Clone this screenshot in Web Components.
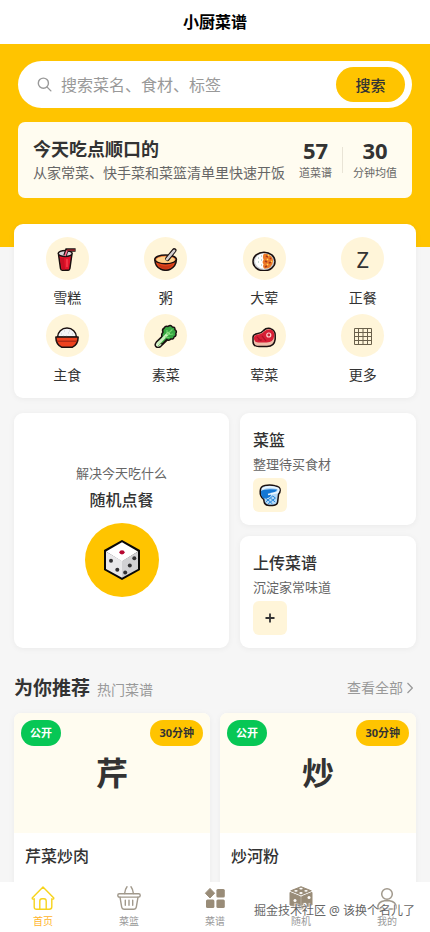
<!DOCTYPE html>
<html lang="zh-CN">
<head>
<meta charset="utf-8">
<meta name="viewport" content="width=device-width, initial-scale=1">
<title>小厨菜谱</title>
<style>
html, body { margin: 0; height: 100%; }
body {
  --brand: #ffc400; --ink: #333; --muted: #666; --faint: #999; --cream: #fffcf0; --soft: #fff5d9;
  --shadow: 0 1px 6px rgba(0, 0, 0, .05);
  font-family: "Noto Sans", "Noto Sans CJK SC", sans-serif;
  color: var(--ink); background: #f6f6f6;
}
</style>
</head>
<body>
<recipe-app></recipe-app>
<script>
const define = (name, html, setup) => {
  const template = document.createElement('template');
  template.innerHTML = html;
  customElements.define(name, class extends HTMLElement {
    constructor() {
      super();
      this.attachShadow({ mode: 'open' }).append(template.content.cloneNode(true));
    }
    connectedCallback() { if (setup) setup(this, this.shadowRoot); }
  });
};

const K = 'stroke="#1a1010" stroke-width="1.5" stroke-linejoin="round" stroke-linecap="round"';
const ICONS = {
  search: ['0 0 16 16', '<g fill="none" stroke="#999" stroke-width="1.5" stroke-linecap="round"><circle cx="6.8" cy="6.6" r="5.4"/><path d="M10.8 10.8 14.8 14.8"/></g>'],
  chevron: ['0 0 6 12', '<path d="M.5 1 5.3 6 .5 11" fill="none" stroke="#999" stroke-width="1.2"/>'],
  cup: ['0 0 24 24', `<path d="M3.6 8 5.5 21.5Q5.8 23.3 8 23.3h4.6q2 0 2.3-1.8L16.8 8Z" fill="#e5142b" ${K}/><path d="M5 11h4l1 11.5H7Z" fill="#c80f24"/><path d="M12 12v8" stroke="#ff5261"/><ellipse cx="10.2" cy="6.5" rx="7" ry="3" fill="#d6d6da" ${K}/><path d="m10 8.5 1.8-5.4h8.8" fill="none" stroke="#1a1010" stroke-width="3.5"/><path d="m10 9 2-5.6" stroke="#ff6f91" stroke-width="1.6"/><path d="M12 3.1h8" stroke="#b52a33" stroke-width="1.3"/>`],
  porridge: ['0 0 24 24', `<path d="M.8 12.5C1 19 5 21.5 7 22.3q5 2 9.2 0C19.5 20.6 22.3 17 22.4 12.5Z" fill="#e6481d" ${K}/><path d="M4 17q7 4 15 0-3 5-7.5 5Q6 22 4 17" fill="#c93716"/><ellipse cx="11.6" cy="12.3" rx="10.8" ry="4.4" fill="#f17635" ${K}/><ellipse cx="11.6" cy="12.7" rx="9.3" ry="3.2" fill="#ffd38d"/><path d="m13.5 11.7 6.7-8.3" stroke="#1a1010" stroke-width="4.6" stroke-linecap="round"/><path d="m13 12.3 7.1-8.6" stroke="#d5cfcf" stroke-width="2.5" stroke-linecap="round"/>`],
  curry: ['0 0 24 24', `<ellipse cx="12" cy="14.5" rx="11" ry="9.3" fill="#c7ccd1" ${K}/><ellipse cx="12" cy="14.2" rx="9" ry="7.6" fill="#fff"/><path d="M12 6.6q8.8.4 9 7.6-.4 7-8.5 7.6-2.4-2-.9-4.5-2-2.2 0-4.6-1.5-3.6.4-6.1Z" fill="#ed7926"/><path d="m14 9 2 1m2 1 1 1m-6 2 2 1m2 1 2-1m-4 4-2 1" stroke="#a63b1c" stroke-width="1.7"/><path d="m16 8 1 1m-2 3 1 1m3 1 1 1m-5 2 1 1" stroke="#ffd85c" stroke-width="1.5"/><path d="M6 11h1m2-2h1m-4 6h1m2-2h1m-1 5h1" stroke="#8bb0a2"/>`],
  rice: ['0 0 24 24', `<path d="M2.5 13.2a9.5 9.2 0 0 1 19 0Z" fill="#f4f4f6" ${K}/><path d="M6 10h1m2-3h1m3 2h1m3 1h1m-7 2h1m-4 0h1m5-5h1" stroke="#cbcbd5"/><path d="M.9 13h22.2q.2 7-5.6 10.200H6.500Q.700 20 .900 13Z" fill="#ee421f" ${K}/><path d="M1.700 17.200h20.600" stroke="#9e2416" stroke-width="1.100"/>`],
  greens: ['0 0 24 24', `<path d="m12 8.500-9.700 9.600q-2.100 2.800-.3 4.600 2 1.600 4.800-.4l9.400-9.100Z" fill="#dcf5d3" ${K}/><path d="M8 12.500Q7 10 9 8.200 7.600 5.500 10.200 4q1-2.400 3.800-1.500 2.500-2.200 4.300.4 3-.1 2.600 2.800 2.400 1.500.9 3.700.8 2.800-1.700 3.500-.6 2.800-3.300 2-2 2.400-4.200.5L8.500 20 5 18.500Z" fill="#37a743" ${K}/><path d="m4 19.800 11-11.300" stroke="#c9f2bd" stroke-width="2.700"/><path d="M13 10.500V6m0 4.500 5.400-5M13.800 10.800l5.500-.8M11 13l4.500.5" fill="none" stroke="#73d66d" stroke-width="1.100"/><path d="m4 22 4-3.600" stroke="#74b968"/>`],
  meat: ['0 0 24 24', `<path d="M1 14q-.4-3.800 5-4.400 3.400-.4 5.400-3 3-3 7-2 5 1.600 4.800 7v3.500q-.8 7.400-8.200 7.400H7q-6 0-6-5Z" fill="#efbfaa" ${K}/><path d="M1.800 14q.2-3.200 5-3.600 3.700-.4 5.600-3.200 2.700-2.400 5.900-1.600 4.200 1.400 4 6-.8 7-7.600 7H6.600Q1.800 18.300 1.800 14Z" fill="#d71f36"/><path d="m5 12.800 4 4m1-5 4 5M6 16h4" stroke="#ad1329" stroke-width="1.200"/><circle cx="16.800" cy="11" r="2" fill="#c62435" stroke="#ffd2d2" stroke-width="1.200"/>`],
  grid: ['0 0 24 24', '<path d="M3.500 4.500h17v16h-17Zm4 0v16m4.500-16v16m4.500-16v16m-13-12h17m-17 4h17m-17 4h17" fill="none" stroke="#6a604b" stroke-width="1"/>'],
  bucket: ['0 0 24 24', `<path d="M2.200 8Q2.300 3.400 7 2.500q5-1 10 .2 5.200 1 5.200 4.500 0 2.200-1.600 4l-1 8q-.4 2.600-3.500 3.100-3.300.6-6.300 0-3-.5-3.600-3.300l-.5-2.700Q1.800 13.500 2.200 8Z" fill="#b3d8f7" ${K}/><path d="M3 8q3.500-2.600 16-1.400-.5 3-6.500 3.200 1.500 3-1.500 4.800-3 1.200-5.500.8Q2.500 12.700 3 8" fill="#1477d4"/><path d="M4 6Q11 2 20.300 5.500 21.500 7 19.500 9.500L10 11.500" fill="none" stroke="#eaf6ff" stroke-width="1.700"/><path d="m7.500 15 2.500 2 2.300-2 2.500 2 2.700-2M7.800 19l2.200-2 2.500 2 2.300-2 2.300 2m-7 2 2.200-2 2.200 2M12.300 15l2.500-2 2.500 2" fill="none" stroke="#2384d8"/>`],
  plus: ['0 0 24 24', '<path d="M12 7.500v9M7.500 12h9" stroke="#333" stroke-width="1.800"/>'],
  die: ['0 0 36 40', '<path d="M18 0 36 10v20L18 40 0 30V10Z" fill="#080808"/><path d="M18 2.300 34 11.500 18 21.400 2 11.500Z" fill="#fff"/><path d="M2 11.500 18 21v16.700L2 29Z" fill="#e8e8ea"/><path d="M34 11.500 18 21v16.700L34 29Z" fill="#d1d1d4"/><ellipse cx="18" cy="12.300" rx="2.600" ry="2.100" fill="#b70832"/><g fill="#303033"><circle cx="7" cy="20.800" r="2"/><circle cx="13.300" cy="29.800" r="2"/><circle cx="30.300" cy="18.200" r="2"/><circle cx="25.800" cy="25.400" r="2"/><circle cx="21.200" cy="32.500" r="2"/></g>'],
  home: ['0 0 24 24', '<g fill="none" stroke="#f7d31b" stroke-width="1.400" stroke-linejoin="round" stroke-linecap="round"><path d="M1.200 12 12 1l10.800 11c.2 1.300-1.300 1.300-2 .8v8q0 2.500-2.500 2.500H5.700q-2.500 0-2.500-2.500v-8c-.7.5-2.200.5-2-.8Z"/><path d="M8.800 23v-8q0-2.200 2.200-2.200h2q2.200 0 2.200 2.200v8"/></g>'],
  basket: ['0 0 24 24', '<g fill="none" stroke="#a1998c" stroke-width="1.400" stroke-linejoin="round" stroke-linecap="round"><path d="M10 .8Q8.200 3 7.600 7.500M14 .8q1.800 2.200 2.400 6.700"/><rect x=".8" y="7.800" width="22.400" height="3.300" rx="1.500"/><path d="m3 11.200 1.700 10q.3 2 2.300 2h10q2 0 2.300-2l1.700-10M8.300 14.200v5M12 14.200v5M15.700 14.200v5"/></g>'],
  menu: ['0 0 24 24', '<g fill="#998c78"><path d="m7 2.400 4.600 4.800L7 12 2.400 7.200Z" stroke="#998c78" stroke-linejoin="round"/><rect x="13.400" y="3" width="8.400" height="8.400" rx="1.500"/><rect x="3" y="13.500" width="8.400" height="8.400" rx="1.500"/><rect x="13.400" y="13.500" width="8.400" height="8.400" rx="1.500"/></g>'],
  dice: ['0 0 24 24', '<g fill="#998c78" stroke="#998c78" stroke-linejoin="round"><path d="m12 .7 10.300 4.100L12 9 1.700 4.800Z"/><path d="m1 6.400 10.300 4.200v12.700L1 19Z"/><path d="m23 6.400-10.300 4.200v12.700L23 19Z"/></g><g fill="#fff"><ellipse cx="12" cy="2.600" rx="1.700" ry=".9"/><ellipse cx="7" cy="4.800" rx="1.700" ry=".9"/><ellipse cx="17" cy="4.800" rx="1.700" ry=".9"/><ellipse cx="12" cy="7" rx="1.700" ry=".9"/><circle cx="6" cy="14.500" r="1.500"/><circle cx="16" cy="18.300" r="1.500"/><circle cx="20" cy="11.500" r="1.500"/></g>'],
  person: ['0 0 24 24', '<g fill="none" stroke="#a1998c" stroke-width="1.500"><circle cx="12" cy="8" r="5.300"/><path d="M2.800 21.500q.2-6 6.700-6.800h5q6.500.8 6.700 6.800 0 1.500-1.500 1.500H4.300q-1.500 0-1.500-1.500Z"/></g>']
};

define('ui-icon', '<style>:host{display:block;flex:none;width:24px;height:24px}svg{display:block;width:100%;height:100%}</style><svg aria-hidden="true"></svg>', (el, root) => {
  const [box, art] = ICONS[el.getAttribute('name')];
  const svg = root.querySelector('svg');
  svg.setAttribute('viewBox', box);
  svg.innerHTML = art;
});

define('app-header', `<style>
:host{display:flex;flex:none;height:44px;align-items:center;justify-content:center;background:#fff;color:#000}
h1{margin:0;font-size:16px;line-height:24px;font-weight:700}
</style><h1><slot></slot></h1>`);

define('search-bar', `<style>
:host{display:block}
form{display:flex;align-items:center;gap:9px;height:47px;box-sizing:border-box;padding:0 7px 0 19px;border-radius:24px;background:#fff}
ui-icon{width:15px;height:15px}
input{flex:1;min-width:0;border:0;outline:0;padding:0;background:none;font:16px/24px "Noto Sans","Noto Sans CJK SC",sans-serif;color:var(--ink)}
input::placeholder{color:#999;opacity:1}
button{border:0;height:35px;width:69px;padding:0;border-radius:18px;background:var(--brand);color:var(--ink);font:500 15px/24px "Noto Sans CJK SC",sans-serif}
</style><form onsubmit="return false"><ui-icon name="search"></ui-icon><input type="text" aria-label="搜索菜谱" placeholder="搜索菜名、食材、标签"><button>搜索</button></form>`);

define('stat-item', `<style>
:host{display:flex;flex-direction:column;align-items:center;white-space:nowrap}
b{font-size:22px;line-height:26px}span{font-size:11px;line-height:20px;color:var(--muted)}
</style><b><slot name="value"></slot></b><span><slot></slot></span>`);

define('hero-card', `<style>
:host{display:flex;align-items:center;justify-content:space-between;height:76px;box-sizing:border-box;padding:0 15px;border-radius:7px;background:var(--cream)}
h2{margin:0;font-size:18px;line-height:26px;font-weight:700}
p{margin:0;font-size:14px;line-height:22px;color:var(--muted);white-space:nowrap}
.stats{display:flex;align-items:center;gap:10px}
i{width:1px;height:26px;background:#e9e4d6}
</style><div><h2>今天吃点顺口的</h2><p>从家常菜、快手菜和菜篮清单里快速开饭</p></div>
<div class="stats"><stat-item><span slot="value">57</span>道菜谱</stat-item><i></i><stat-item><span slot="value">30</span>分钟均值</stat-item></div>`);

define('category-item', `<style>
:host{display:block}
a{display:flex;flex-direction:column;align-items:center;gap:8px;color:inherit;text-decoration:none;font-size:14px;line-height:20px}
.disc{display:flex;align-items:center;justify-content:center;width:43px;height:43px;border-radius:50%;background:var(--soft)}
b{font-size:22px;line-height:28px;font-weight:400}
</style><a href="#"><span class="disc"></span><slot></slot></a>`, (el, root) => {
  const letter = el.getAttribute('letter');
  root.querySelector('.disc').innerHTML = letter ? `<b>${letter}</b>` : `<ui-icon name="${el.getAttribute('icon')}"></ui-icon>`;
});

define('category-grid', `<style>
:host{display:grid;grid-template-columns:repeat(4,1fr);row-gap:6px;padding:13px 4px;border-radius:9px;background:#fff;box-shadow:var(--shadow)}
</style><slot></slot>`);

define('random-card', `<style>
:host{display:grid}
a{display:flex;flex-direction:column;align-items:center;justify-content:center;border-radius:9px;background:#fff;box-shadow:var(--shadow);color:inherit;text-decoration:none}
span{font-size:13px;line-height:18px;color:var(--muted)}
strong{margin:7px 0 12px;font-size:16px;line-height:22px;font-weight:500}
.disc{display:flex;align-items:center;justify-content:center;width:74px;height:74px;border-radius:50%;background:var(--brand)}
ui-icon{width:36px;height:40px}
</style><a href="#"><span>解决今天吃什么</span><strong>随机点餐</strong><div class="disc"><ui-icon name="die"></ui-icon></div></a>`);

define('action-card', `<style>
:host{display:block}
a{display:block;padding:16px 13px 13px;border-radius:9px;background:#fff;box-shadow:var(--shadow);color:inherit;text-decoration:none}
strong{display:block;font-size:16px;line-height:22px;font-weight:500}
.note{display:block;margin:4px 0 5px;font-size:13px;line-height:18px;color:var(--muted)}
.tile{display:flex;align-items:center;justify-content:center;width:34px;height:34px;border-radius:6px;background:var(--soft)}
</style><a href="#"><strong><slot></slot></strong><span class="note"><slot name="note"></slot></span><span class="tile"></span></a>`, (el, root) => {
  root.querySelector('.tile').innerHTML = `<ui-icon name="${el.getAttribute('icon')}"></ui-icon>`;
});

define('section-head', `<style>
:host{display:flex;align-items:center;justify-content:space-between;height:28px;padding-right:3px}
div{display:flex;align-items:baseline;gap:7px}
h2{margin:0;font-size:19px;line-height:28px;font-weight:700}
span,a{font-size:14px;line-height:20px;color:var(--faint)}
a{display:flex;align-items:center;gap:4px;text-decoration:none}
ui-icon{width:6px;height:12px}
</style><div><h2><slot></slot></h2><span><slot name="note"></slot></span></div><a href="#">查看全部<ui-icon name="chevron"></ui-icon></a>`);

define('recipe-card', `<style>
:host{display:block;overflow:hidden;border-radius:7px;background:#fff;box-shadow:var(--shadow)}
.cover{position:relative;display:flex;align-items:center;justify-content:center;height:120px;background:var(--cream);font-size:32px;line-height:40px;font-weight:700}
.tag{position:absolute;top:7px;padding:0 9px;border-radius:13px;font-size:11px;line-height:26px}
.open{left:7px;background:#07c755;color:#fff}
.time{right:7px;background:var(--brand)}
h3{margin:0;padding:11px 11px 48px;font-size:16px;line-height:24px;font-weight:500}
</style><div class="cover"><slot name="mark"></slot><span class="tag open">公开</span><span class="tag time"><slot name="time"></slot></span></div><h3><slot></slot></h3>`);

define('tab-item', `<style>
:host{display:block;flex:1}
a{display:flex;flex-direction:column;align-items:center;gap:4px;padding-top:4px;text-decoration:none;color:#999;font-size:10px;line-height:14px}
:host([active]) a{color:#ffb52b}
</style><a href="#"><slot></slot></a>`, (el, root) => {
  const icon = document.createElement('ui-icon');
  icon.setAttribute('name', el.getAttribute('icon'));
  root.querySelector('a').prepend(icon);
});

define('tab-bar', `<style>
:host{display:block;flex:none;position:relative;background:#fff}
nav{display:flex;height:50px}
.credit{position:absolute;right:15px;top:19px;font-size:12px;line-height:20px;color:#666;white-space:nowrap;text-shadow:0 0 1px #fff,1px 1px 1px #fff,-1px -1px 1px #fff}
</style><nav><slot></slot></nav><span class="credit"><slot name="credit"></slot></span>`);

define('recipe-app', `<style>
:host{display:flex;flex-direction:column;height:100vh}
main{flex:1;min-height:0;overflow-y:auto;scrollbar-width:none}
.hero{display:grid;gap:14px;padding:17px 18px 49px;background:var(--brand)}
.page{position:relative;padding:0 14px 16px;margin-top:-23px}
.quick{display:grid;grid-template-columns:11fr 9fr;gap:11px;margin:15px 0 26px}
.side{display:grid;gap:11px}
.recipes{display:grid;grid-template-columns:1fr 1fr;gap:10px;margin-top:11px}
</style>
<app-header>小厨菜谱</app-header>
<main>
<div class="hero"><search-bar></search-bar><hero-card></hero-card></div>
<div class="page">
<category-grid>
<category-item icon="cup">雪糕</category-item><category-item icon="porridge">粥</category-item><category-item icon="curry">大荤</category-item><category-item letter="Z">正餐</category-item>
<category-item icon="rice">主食</category-item><category-item icon="greens">素菜</category-item><category-item icon="meat">荤菜</category-item><category-item icon="grid">更多</category-item>
</category-grid>
<div class="quick"><random-card></random-card><div class="side">
<action-card icon="bucket">菜篮<span slot="note">整理待买食材</span></action-card>
<action-card icon="plus">上传菜谱<span slot="note">沉淀家常味道</span></action-card></div></div>
<section-head>为你推荐<span slot="note">热门菜谱</span></section-head>
<div class="recipes">
<recipe-card><span slot="mark">芹</span><span slot="time">30分钟</span>芹菜炒肉</recipe-card>
<recipe-card><span slot="mark">炒</span><span slot="time">30分钟</span>炒河粉</recipe-card>
</div></div>
</main>
<tab-bar>
<tab-item icon="home" active>首页</tab-item><tab-item icon="basket">菜篮</tab-item><tab-item icon="menu">菜谱</tab-item><tab-item icon="dice">随机</tab-item><tab-item icon="person">我的</tab-item>
<span slot="credit">掘金技术社区 @ 该换个名儿了</span>
</tab-bar>`);
</script>
</body>
</html>
